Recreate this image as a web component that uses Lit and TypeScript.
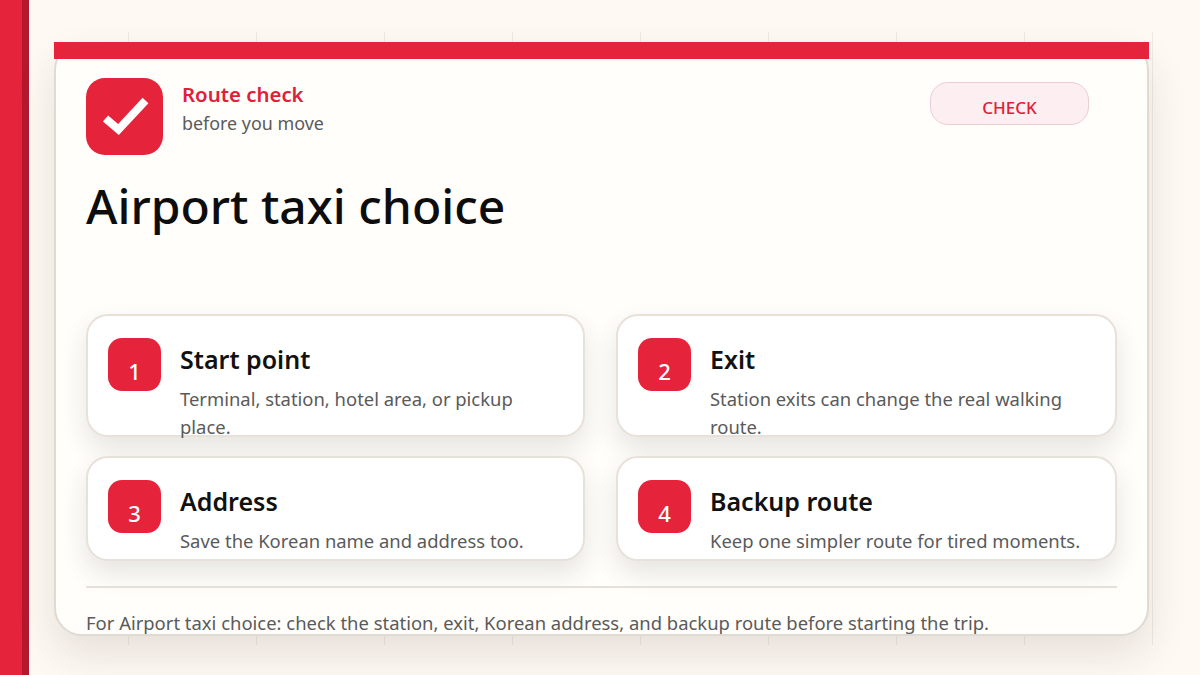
import { LitElement, html, css } from "lit";
import { customElement } from "lit/decorators.js";

const STEPS = [
  { n: "1", t: "Start point", d: "Terminal, station, hotel area, or pickup place." },
  { n: "2", t: "Exit", d: "Station exits can change the real walking route." },
  { n: "3", t: "Address", d: "Save the Korean name and address too." },
  { n: "4", t: "Backup route", d: "Keep one simpler route for tired moments." },
];

@customElement("app-root")
export class AppRoot extends LitElement {
  static styles = css`
    :host {
      display: block;
      width: 1200px;
      height: 675px;
      overflow: hidden;
      position: relative;
      background: #fef9f3;
      font-family: "Noto Sans", "Open Sans", sans-serif;
    }
    .rail {
      position: absolute;
      left: 0;
      top: 0;
      bottom: 0;
      width: 22px;
      background: #e5233b;
      border-right: 7px solid #b3182f;
    }
    .grid {
      position: absolute;
      left: 0;
      top: 32px;
      width: 1153px;
      height: 613px;
      background-image: linear-gradient(to right, #eee9e3 1px, transparent 1px);
      background-size: 128px 100%;
    }
    .page {
      position: relative;
      box-sizing: border-box;
      height: 675px;
      padding: 42px 51px 39px 54px;
    }
    .card {
      position: relative;
      box-sizing: border-box;
      height: 594px;
      padding: 34px 30px 0 30px;
      background: #fffefb;
      border: 2px solid #dfdad2;
      border-radius: 28px;
      box-shadow: 0 18px 40px rgba(60, 45, 30, 0.12);
      display: flex;
      flex-direction: column;
    }
    .card > * {
      flex: none;
    }
    .topbar {
      position: absolute;
      left: 54px;
      top: 42px;
      width: 1095px;
      height: 17px;
      background: #e5233b;
    }
    .head {
      display: flex;
      align-items: flex-start;
      height: 77px;
    }
    .logo {
      width: 77px;
      height: 77px;
      border-radius: 19px;
      background: #e5233b;
      flex: none;
    }
    .logo svg {
      display: block;
    }
    .brand {
      margin-left: 19px;
      display: flex;
      flex-direction: column;
    }
    .brand b {
      font-size: 20.4px;
      font-weight: 600;
      line-height: 32px;
      color: #df2039;
    }
    .brand span {
      font-size: 17.9px;
      line-height: 26px;
      color: #5a5a5a;
    }
    .pill {
      margin-left: auto;
      margin-right: 28px;
      margin-top: 4px;
      box-sizing: border-box;
      width: 159px;
      height: 43px;
      border-radius: 18px;
      border: 1px solid #eccdd4;
      background: #fdeef1;
      color: #df2039;
      font-size: 17px;
      font-weight: 500;
      text-align: center;
      line-height: 49px;
    }
    h1 {
      margin: 17px 0 0;
      font-size: 48px;
      font-weight: 500;
      line-height: 68px;
      color: #0d0d0d;
    }
    .steps {
      margin-top: 74px;
      display: grid;
      grid-template-columns: 498.5px 500.5px;
      grid-template-rows: 122.5px 104.5px;
      gap: 19.5px 31.5px;
    }
    .step {
      box-sizing: border-box;
      background: #fff;
      border: 2px solid #e8e1d9;
      border-radius: 22px;
      box-shadow: 0 12px 26px rgba(50, 40, 30, 0.12);
      padding: 22px 20px 0;
      display: flex;
      gap: 19px;
      min-height: 0;
    }
    .num {
      width: 53px;
      height: 53px;
      flex: none;
      border-radius: 14px;
      background: #e5233b;
      color: #fff;
      font-size: 22px;
      font-weight: 500;
      text-align: center;
      line-height: 66px;
    }
    .txt {
      min-width: 0;
    }
    .txt h2 {
      margin: 0;
      font-size: 25px;
      font-weight: 600;
      line-height: 42px;
      color: #111;
    }
    .txt p {
      margin: 5px 0 0;
      font-size: 18.43px;
      line-height: 28px;
      color: #5a5a5a;
    }
    hr {
      margin: 25.5px 0 0;
      border: none;
      height: 2px;
      background: #e6e0d9;
      width: 1031px;
    }
    .foot {
      margin-top: 21px;
      font-size: 18.45px;
      line-height: 28px;
      color: #5a5a5a;
      white-space: nowrap;
    }
  `;

  render() {
    return html`
      <div class="grid"></div>
      <div class="rail"></div>
      <div class="page">
        <div class="card">
          <div class="head">
            <div class="logo">
              <svg width="77" height="77" viewBox="0 0 77 77">
                <path d="M19.5 40.5 L32.5 51.5 L59.5 22.5" fill="none" stroke="#fff" stroke-width="8" />
              </svg>
            </div>
            <div class="brand"><b>Route check</b><span>before you move</span></div>
            <div class="pill">CHECK</div>
          </div>
          <h1>Airport taxi choice</h1>
          <div class="steps">
            ${STEPS.map(
              (s) => html`<div class="step">
                <div class="num">${s.n}</div>
                <div class="txt"><h2>${s.t}</h2><p>${s.d}</p></div>
              </div>`
            )}
          </div>
          <hr />
          <div class="foot">For Airport taxi choice: check the station, exit, Korean address, and backup route before starting the trip.</div>
        </div>
      </div>
      <div class="topbar"></div>
    `;
  }
}
